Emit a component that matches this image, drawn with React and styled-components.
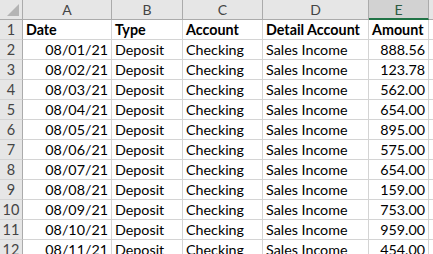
import React from "react";
import styled, { createGlobalStyle } from "styled-components";

const GlobalStyle = createGlobalStyle`
  html, body {
    margin: 0;
    padding: 0;
    background: #ffffff;
  }
  body {
    font-family: "Lato", "Liberation Sans", sans-serif;
    overflow: hidden;
  }
`;

const columns = [
  { key: "A", width: 89 },
  { key: "B", width: 71 },
  { key: "C", width: 80 },
  { key: "D", width: 106 },
  { key: "E", width: 60, selected: true },
];

const amounts = ["888.56", "123.78", "562.00", "654.00", "895.00", "575.00", "654.00", "159.00", "753.00", "959.00", "454.00"];

const rows = amounts.map((amount, i) => ({
  date: `08/${String(i + 1).padStart(2, "0")}/21`,
  type: "Deposit",
  account: "Checking",
  detail: "Sales Income",
  amount,
}));

const App = () => {
  return (
    <>
      <GlobalStyle />
      <Sheet>
        <Grid $cols={columns.map((c) => c.width + "px").join(" ") + " 1fr"}>
          <Corner>
            <CornerTriangle />
          </Corner>
          {columns.map((c) => (
            <ColHeader key={c.key} $selected={c.selected}>
              {c.key}
            </ColHeader>
          ))}
          <ColHeader />

          <RowHeader>1</RowHeader>
          <Cell $bold>Date</Cell>
          <Cell $bold>Type</Cell>
          <Cell $bold>Account</Cell>
          <Cell $bold>Detail Account</Cell>
          <Cell $bold>Amount</Cell>
          <Cell />

          {rows.map((r, i) => (
            <React.Fragment key={i}>
              <RowHeader>{i + 2}</RowHeader>
              <Cell $right>{r.date}</Cell>
              <Cell>{r.type}</Cell>
              <Cell>{r.account}</Cell>
              <Cell>{r.detail}</Cell>
              <Cell $right>{r.amount}</Cell>
              <Cell />
            </React.Fragment>
          ))}
        </Grid>
      </Sheet>
    </>
  );
};

export default App;

//------------------------------------------------------------------------------
const Sheet = styled.div`
  width: 433px;
  height: 254px;
  overflow: hidden;
  background: #ffffff;
`;

const Grid = styled.div`
  display: grid;
  grid-template-columns: 23px ${(p) => p.$cols};
  grid-auto-rows: 20px;
  width: 460px;
`;

const Corner = styled.div`
  position: relative;
  background: #e6e6e6;
  border-right: 1px solid #ababab;
  border-bottom: 1px solid #ababab;
`;

const CornerTriangle = styled.div`
  position: absolute;
  right: 3px;
  bottom: 3px;
  width: 0;
  height: 0;
  border-left: 12px solid transparent;
  border-bottom: 12px solid #b4b4b4;
`;

const ColHeader = styled.div`
  display: flex;
  align-items: center;
  justify-content: center;
  background: ${(p) => (p.$selected ? "#d2d2d2" : "#e6e6e6")};
  color: ${(p) => (p.$selected ? "#2c5a3f" : "#444444")};
  font-size: 14px;
  border-right: 1px solid #ababab;
  border-bottom: ${(p) => (p.$selected ? "2px solid #217346" : "1px solid #ababab")};
  box-sizing: border-box;
`;

const RowHeader = styled.div`
  display: flex;
  align-items: center;
  justify-content: center;
  background: #e6e6e6;
  color: #444444;
  font-size: 14.5px;
  border-right: 1px solid #ababab;
  border-bottom: 1px solid #d4d4d4;
  box-sizing: border-box;
`;

const Cell = styled.div`
  display: flex;
  align-items: center;
  justify-content: ${(p) => (p.$right ? "flex-end" : "flex-start")};
  padding: 0 3px 0 3px;
  font-size: 14.3px;
  font-weight: ${(p) => (p.$bold ? 700 : 400)};
  color: #000000;
  white-space: nowrap;
  overflow: hidden;
  border-right: 1px solid #d4d4d4;
  border-bottom: 1px solid #d4d4d4;
  box-sizing: border-box;
`;
